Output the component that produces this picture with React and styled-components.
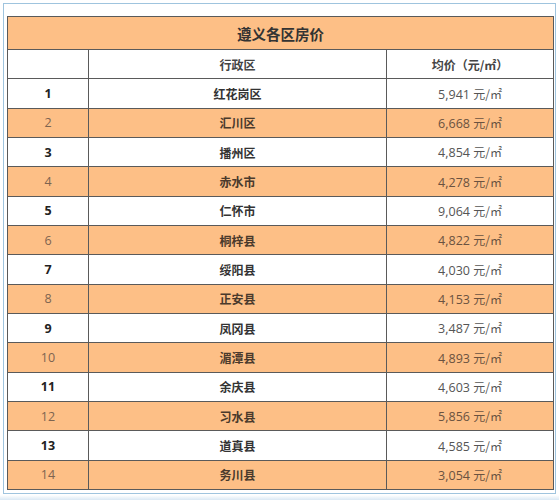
import React from "react";
import styled, { createGlobalStyle } from "styled-components";

const Global = createGlobalStyle`
  html, body { margin: 0; padding: 0; background: #fff; }
  body { font-family: "Noto Sans CJK SC", "Noto Sans", sans-serif; }
`;

const Page = styled.div`
  width: 559px;
  height: 500px;
  box-sizing: border-box;
  padding: 3px 3px 0 3px;
  background: linear-gradient(#fff 0, #fff 495px, #dbe9f4 500px);
`;

const Frame = styled.div`
  box-sizing: border-box;
  width: 553px;
  border: 1px solid #9fc4de;
  background: #fff;
  padding: 12px 1px 3px 3px;
`;

const Table = styled.table`
  width: 546px;
  border-collapse: collapse;
  table-layout: fixed;
  font-size: 12px;
  color: #333;
`;

const TitleCell = styled.th`
  height: 32px;
  padding: 0;
  background: #fdbf86;
  border: 1px solid #5a5a5a;
  font-size: 14.5px;
  font-weight: bold;
  color: #333;
  text-align: center;
`;

const Row = styled.tr`
  height: 29.35px;
  background: ${(p) => (p.$alt ? "#fdbf86" : "#fff")};
`;

const Cell = styled.td`
  padding: 0;
  border: 1px solid #5a5a5a;
  text-align: center;
  white-space: nowrap;
`;

const HeadCell = styled(Cell)`
  font-weight: bold;
  color: #444;
`;

const NumCell = styled(Cell)`
  font-family: "Open Sans", "Noto Sans", sans-serif;
  font-size: 12.5px;
  font-weight: ${(p) => (p.$alt ? "normal" : "bold")};
  color: ${(p) => (p.$alt ? "#7d6450" : "#222")};
`;

const NameCell = styled(Cell)`
  font-weight: bold;
  color: ${(p) => (p.$alt ? "#4a3a2c" : "#333")};
`;

const PriceCell = styled(Cell)`
  font-family: "Open Sans", "Noto Sans CJK SC", sans-serif;
  font-size: 12.5px;
  color: ${(p) => (p.$alt ? "#6a5240" : "#555")};
`;

const Unit = styled.span`
  font-family: "Noto Sans CJK SC", sans-serif;
  font-size: 12px;
`;

const data = [
  ["红花岗区", "5,941"],
  ["汇川区", "6,668"],
  ["播州区", "4,854"],
  ["赤水市", "4,278"],
  ["仁怀市", "9,064"],
  ["桐梓县", "4,822"],
  ["绥阳县", "4,030"],
  ["正安县", "4,153"],
  ["凤冈县", "3,487"],
  ["湄潭县", "4,893"],
  ["余庆县", "4,603"],
  ["习水县", "5,856"],
  ["道真县", "4,585"],
  ["务川县", "3,054"],
];

export default function App() {
  return (
    <>
      <Global />
      <Page>
        <Frame>
          <Table>
            <colgroup>
              <col style={{ width: 81 }} />
              <col style={{ width: 298 }} />
              <col style={{ width: 167 }} />
            </colgroup>
            <thead>
              <tr>
                <TitleCell colSpan={3}>遵义各区房价</TitleCell>
              </tr>
            </thead>
            <tbody>
              <Row>
                <HeadCell />
                <HeadCell>行政区</HeadCell>
                <HeadCell>均价（元/㎡）</HeadCell>
              </Row>
              {data.map(([name, price], i) => {
                const alt = i % 2 === 1;
                return (
                  <Row key={name} $alt={alt}>
                    <NumCell $alt={alt}>{i + 1}</NumCell>
                    <NameCell $alt={alt}>{name}</NameCell>
                    <PriceCell $alt={alt}>
                      {price} <Unit>元/㎡</Unit>
                    </PriceCell>
                  </Row>
                );
              })}
            </tbody>
          </Table>
        </Frame>
      </Page>
    </>
  );
}
